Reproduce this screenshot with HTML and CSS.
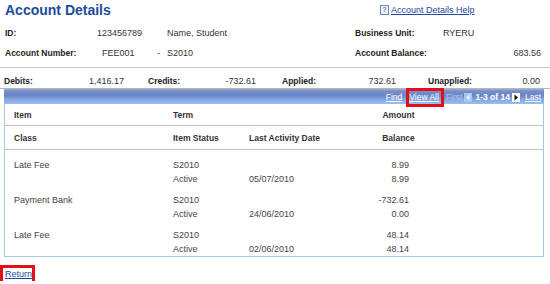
FILE: index.html
```html
<!DOCTYPE html>
<html lang="en">
<head>
    <meta charset="UTF-8">
    <meta name="viewport" content="width=device-width, initial-scale=1.0">
    <title>Account Details</title>
    <link rel="stylesheet" href="styles.css">
</head>
<body>
    <div class="page-head">
        <h1 class="title">Account Details</h1>
        <a class="help" href="#"><span class="help-icon">?</span><span class="help-text">Account Details Help</span></a>
    </div>

    <div class="info">
        <div class="lbl">ID:</div>
        <div class="val span2">123456789</div>
        <div class="val">Name, Student</div>
        <div class="lbl">Business Unit:</div>
        <div class="val">RYERU</div>

        <div class="lbl">Account Number:</div>
        <div class="val acct">FEE001</div>
        <div class="val">-</div>
        <div class="val">S2010</div>
        <div class="lbl">Account Balance:</div>
        <div class="val num">683.56</div>
    </div>

    <div class="totals">
        <div class="pair"><span class="lbl">Debits:</span><span class="val">1,416.17</span></div>
        <div class="pair"><span class="lbl">Credits:</span><span class="val">-732.61</span></div>
        <div class="pair"><span class="lbl">Applied:</span><span class="val">732.61</span></div>
        <div class="pair"><span class="lbl">Unapplied:</span><span class="val">0.00</span></div>
    </div>

    <div class="grid">
        <div class="grid-bar">
            <a class="nav-link" href="#">Find</a>
            <a class="nav-link marked view-all" href="#">View All</a>
            <span class="nav-off">First</span>
            <svg class="nav-arrow prev" width="8" height="9" viewBox="0 0 8 9"><rect width="8" height="9" fill="#a9c6f0"/><path d="M5.5 1.5 L2 4.5 L5.5 7.5 Z" fill="#e8f0fc"/></svg>
            <span class="nav-count">1-3 of 14</span>
            <svg class="nav-arrow next" width="8" height="9" viewBox="0 0 8 9"><rect width="8" height="9" fill="#fff"/><path d="M2.5 1.5 L6 4.5 L2.5 7.5 Z" fill="#111"/></svg>
            <a class="nav-link last" href="#">Last</a>
        </div>

        <div class="grid-row grid-head first">
            <div class="c1">Item</div>
            <div>Term</div>
            <div></div>
            <div class="amt-head">Amount</div>
        </div>
        <div class="grid-row grid-head second">
            <div class="c1">Class</div>
            <div>Item Status</div>
            <div>Last Activity Date</div>
            <div class="amt-head">Balance</div>
        </div>

        <div class="grid-body">
            <div class="grid-group">
                <div class="grid-row line">
                    <div class="c1">Late Fee</div><div>S2010</div><div></div><div class="amt">8.99</div>
                </div>
                <div class="grid-row line">
                    <div class="c1"></div><div>Active</div><div>05/07/2010</div><div class="amt">8.99</div>
                </div>
            </div>
            <div class="grid-group">
                <div class="grid-row line">
                    <div class="c1">Payment Bank</div><div>S2010</div><div></div><div class="amt">-732.61</div>
                </div>
                <div class="grid-row line">
                    <div class="c1"></div><div>Active</div><div>24/06/2010</div><div class="amt">0.00</div>
                </div>
            </div>
            <div class="grid-group">
                <div class="grid-row line">
                    <div class="c1">Late Fee</div><div>S2010</div><div></div><div class="amt">48.14</div>
                </div>
                <div class="grid-row line">
                    <div class="c1"></div><div>Active</div><div>02/06/2010</div><div class="amt">48.14</div>
                </div>
            </div>
        </div>
    </div>

    <div class="foot">
        <a class="return marked" href="#">Return</a>
    </div>
</body>
</html>
```

FILE: styles.css
```css
body {
    margin: 0;
    font-family: "Liberation Sans", Arial, sans-serif;
    font-size: 9px;
    color: #333;
    background: #fff;
}
a {
    color: #2546a0;
}
.lbl {
    font-weight: bold;
    font-size: 8.5px;
    color: #222;
}
.val {
    color: #333;
}

/* page title + help */
.page-head {
    display: grid;
    grid-template-columns: 375px auto;
    height: 23px;
    padding-left: 5px;
}
.title {
    margin: 0;
    padding-top: 1px;
    font-size: 14px;
    line-height: 18px;
    color: #1d4c9c;
}
.help {
    display: flex;
    align-items: center;
    align-self: start;
    margin-top: 5px;
    line-height: 10px;
    text-decoration: none;
}
.help-icon {
    display: inline-block;
    width: 7px;
    height: 8px;
    border: 1px solid #6688c8;
    background: #eef3fb;
    font-size: 7px;
    line-height: 8px;
    text-align: center;
    color: #2546a0;
    margin-right: 2px;
}
.help-text {
    text-decoration: underline;
}

/* account info */
.info {
    display: grid;
    grid-template-columns: 92px 60px 10px 188px 88px 98px;
    grid-auto-rows: 20px;
    align-items: center;
    padding: 0 0 4px 5px;
    border-bottom: 1px solid #c4c4c4;
}
.span2 {
    grid-column: span 2;
}
.acct {
    padding-left: 5px;
}
.num {
    text-align: right;
}

.totals {
    display: grid;
    grid-template-columns: 144px 134px 146px 112px;
    padding: 6px 0 0 4px;
    line-height: 14px;
    border-bottom: 1px solid #b4b4b4;
}
.pair {
    display: flex;
    justify-content: space-between;
}
.pair:nth-child(1) { padding-right: 24px; }
.pair:nth-child(2) { padding-right: 26px; }
.pair:nth-child(3) { padding-right: 32px; }

/* grid */
.grid {
    width: 540px;
    margin-left: 4px;
    box-sizing: border-box;
    border: 1px solid #a8c6ec;
    border-top: 0;
}
.grid-bar {
    display: flex;
    justify-content: flex-end;
    align-items: flex-start;
    height: 15px;
    margin: 0 -1px;
    padding: 2px 3px 0 0;
    box-sizing: border-box;
    font-size: 8.5px;
    line-height: 13px;
    background: linear-gradient(to bottom, #a3b2cc 0, #7590c9 12%, #6b84c8 45%, #7b9fdc 62%, #9cbfee 100%);
}
.nav-link {
    color: #fff;
}
.nav-off {
    color: #b6c5e2;
    margin-left: 5px;
}
.nav-count {
    color: #fff;
    font-weight: bold;
    margin-left: 3px;
}
.nav-arrow {
    margin-top: 2px;
}
.nav-arrow.prev,
.nav-arrow.next {
    margin-left: 2px;
}
.view-all {
    margin-left: 7px;
}
.last {
    margin-left: 5px;
}
.marked {
    outline: 3px solid #e3101a;
    padding-right: 2px;
}

.grid-row {
    display: grid;
    grid-template-columns: 168px 76px 121px 57px;
}
.c1 {
    padding-left: 9px;
}
.grid-head {
    align-items: center;
    font-weight: bold;
    font-size: 8.5px;
    color: #333;
    border-bottom: 1px solid #c4c4c4;
}
.grid-head.first {
    height: 21px;
}
.grid-head.second {
    height: 23px;
}
.amt-head {
    text-align: center;
}

.grid-body {
    padding-top: 1px;
}
.grid-group {
    padding-top: 7px;
}
.line {
    line-height: 14px;
    color: #444;
}
.amt {
    text-align: right;
    padding-right: 18px;
}

.foot {
    margin-top: 11px;
    padding-left: 3px;
}
.return {
    display: inline-block;
    padding: 0 0 0 2px;
    line-height: 13px;
}
```
